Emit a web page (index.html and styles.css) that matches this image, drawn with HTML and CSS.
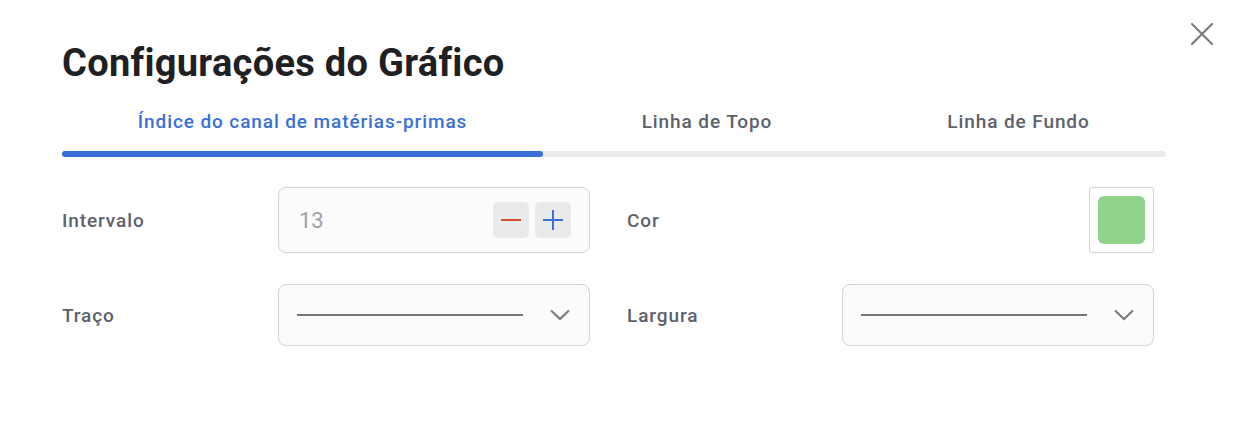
FILE: index.html
```html
<!DOCTYPE html>
<html lang="pt">
<head>
<meta charset="utf-8">
<title>Configurações do Gráfico</title>
<link rel="stylesheet" href="styles.css">
</head>
<body>
<div class="dialog">
  <button class="close" aria-label="Fechar">
    <svg width="22" height="22" viewBox="0 0 22 22"><path d="M1 1L21 21M21 1L1 21" stroke="#75787f" stroke-width="2" stroke-linecap="round"/></svg>
  </button>
  <h1 class="title">Configurações do Gráfico</h1>
  <div class="tabs">
    <div class="tab-labels">
      <div class="tab tab-active">Índice do canal de matérias-primas</div>
      <div class="tab">Linha de Topo</div>
      <div class="tab">Linha de Fundo</div>
    </div>
    <div class="track"><div class="indicator"></div></div>
  </div>
  <div class="fields">
    <div class="field">
      <span class="label">Intervalo</span>
      <div class="box stepper">
        <span class="value">13</span>
        <div class="step-buttons">
          <span class="step-btn"><svg width="20" height="20" viewBox="0 0 20 20"><path d="M0 10H20" stroke="#d2502e" stroke-width="2"/></svg></span>
          <span class="step-btn"><svg width="20" height="20" viewBox="0 0 20 20"><path d="M0 10H20M10 0V20" stroke="#3a6fd5" stroke-width="2"/></svg></span>
        </div>
      </div>
    </div>
    <div class="field">
      <span class="label">Cor</span>
      <div class="swatch"><div class="swatch-color"></div></div>
    </div>
    <div class="field">
      <span class="label">Traço</span>
      <div class="box select">
        <span class="line"></span>
        <svg class="chevron" width="20" height="12" viewBox="0 0 20 12"><path d="M1 1.5L10 10L19 1.5" fill="none" stroke="#75787f" stroke-width="2"/></svg>
      </div>
    </div>
    <div class="field">
      <span class="label">Largura</span>
      <div class="box select">
        <span class="line"></span>
        <svg class="chevron" width="20" height="12" viewBox="0 0 20 12"><path d="M1 1.5L10 10L19 1.5" fill="none" stroke="#75787f" stroke-width="2"/></svg>
      </div>
    </div>
  </div>
</div>
</body>
</html>
```
FILE: styles.css
```css
* { box-sizing: border-box; }
html, body { margin: 0; background: #ffffff; }
body { font-family: Roboto, "Liberation Sans", Arial, sans-serif; }

.dialog {
  position: relative;
  width: 1234px;
  height: 424px;
  padding: 41px 68px 0 62px;
}

.close {
  position: absolute;
  top: 22px;
  right: 20px;
  width: 24px;
  height: 24px;
  padding: 1px;
  border: 0;
  background: none;
  display: flex;
  align-items: center;
  justify-content: center;
}

.title {
  margin: 0;
  font-size: 38px;
  line-height: 44px;
  font-weight: 700;
  color: #1f2024;
  letter-spacing: 0.3px;
}

.tabs { margin-top: 26px; }

.tab-labels {
  display: grid;
  grid-template-columns: 481px 328px 295px;
}

.tab {
  text-align: center;
  font-size: 19px;
  font-weight: 500;
  letter-spacing: 0.9px;
  line-height: 22px;
  color: #5d616c;
  padding-bottom: 18px;
}

.tab-active { color: #3a6fd5; }

.track {
  height: 6px;
  border-radius: 3px;
  background: #ebebec;
  display: flex;
}

.indicator {
  width: 481px;
  height: 6px;
  border-radius: 3px;
  background: #3a6fd5;
}

.fields {
  margin-top: 30px;
  width: 1092px;
  display: grid;
  grid-template-columns: 528px 527px;
  column-gap: 37px;
  row-gap: 31px;
}

.field {
  display: flex;
  align-items: center;
  justify-content: space-between;
}

.label {
  font-size: 19px;
  font-weight: 500;
  letter-spacing: 0.9px;
  color: #5d616c;
}

.box {
  width: 312px;
  border: 1px solid #d3d3d6;
  border-radius: 8px;
  background: #fbfbfb;
  display: flex;
  align-items: center;
  justify-content: space-between;
}

.stepper {
  height: 66px;
  padding: 0 18px 0 20px;
}

.value {
  font-size: 22px;
  color: #9da1a8;
}

.step-buttons { display: flex; gap: 6px; }

.step-btn {
  width: 36px;
  height: 36px;
  border-radius: 5px;
  background: #e9eaec;
  display: flex;
  align-items: center;
  justify-content: center;
}

.swatch {
  width: 65px;
  height: 66px;
  border: 1px solid #d3d3d6;
  border-radius: 3px;
  padding: 8px;
  background: #fff;
}

.swatch-color {
  width: 100%;
  height: 100%;
  border-radius: 6px;
  background: #90d38b;
}

.select {
  height: 62px;
  padding: 0 19px 0 18px;
}

.line {
  width: 226px;
  height: 2px;
  background: #787878;
}
```
